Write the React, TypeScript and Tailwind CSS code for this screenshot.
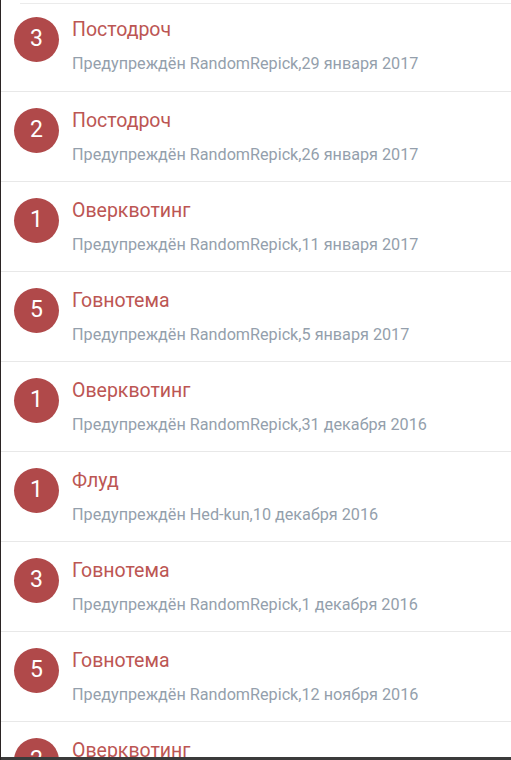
type Warning = {
    points: number;
    reason: string;
    by: string;
    date: string;
};

const warnings: Warning[] = [
    { points: 3, reason: "Постодроч", by: "RandomRepick", date: "29 января 2017" },
    { points: 2, reason: "Постодроч", by: "RandomRepick", date: "26 января 2017" },
    { points: 1, reason: "Оверквотинг", by: "RandomRepick", date: "11 января 2017" },
    { points: 5, reason: "Говнотема", by: "RandomRepick", date: "5 января 2017" },
    { points: 1, reason: "Оверквотинг", by: "RandomRepick", date: "31 декабря 2016" },
    { points: 1, reason: "Флуд", by: "Hed-kun", date: "10 декабря 2016" },
    { points: 3, reason: "Говнотема", by: "RandomRepick", date: "1 декабря 2016" },
    { points: 5, reason: "Говнотема", by: "RandomRepick", date: "12 ноября 2016" },
    { points: 2, reason: "Оверквотинг", by: "RandomRepick", date: "3 ноября 2016" },
];

function WarningRow({ item, first }: { item: Warning; first: boolean }) {
    return (
        <li
            className={
                first
                    ? "flex shrink-0 items-start gap-[13px] h-[87px] pt-[13px] pl-[13px]"
                    : "flex shrink-0 items-start gap-[13px] h-[90px] pt-[16px] pl-[13px] border-t border-[#e8e8e8]"
            }>
            <div className="flex items-center justify-center w-[45px] h-[45px] rounded-full bg-[#b0494a] text-white text-[23px] shrink-0">
                {item.points}
            </div>
            <div className="flex flex-col">
                <span className="text-[19.5px] leading-[26px] text-[#bc5653]">
                    {item.reason}
                </span>
                <span className="mt-[11px] text-[16.2px] leading-[20px] text-[#949fac]">
                    Предупреждён {item.by},{item.date}
                </span>
            </div>
        </li>
    );
}

export default function App() {
    return (
        <div
            className="flex flex-col w-[511px] h-[760px] overflow-hidden bg-white border-l border-[#2b2424]"
            style={{ fontFamily: "Roboto, 'Noto Sans', sans-serif" }}>
            <div className="h-[3px] shrink-0" />
            <div className="h-px ml-[19px] bg-[#ebebeb] shrink-0" />

            <ul className="flex flex-col flex-1 overflow-hidden">
                {warnings.map((w, i) => (
                    <WarningRow key={i} item={w} first={i === 0} />
                ))}
            </ul>

            {/* bottom edge of the page behind */}
            <div className="h-[3px] shrink-0 bg-[#3b3b3b]" />
        </div>
    );
}
